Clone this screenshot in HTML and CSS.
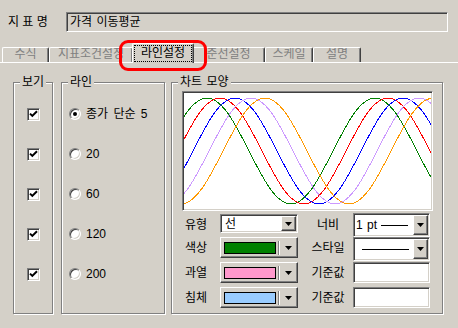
FILE: index.html
```html
<!DOCTYPE html>
<html lang="ko">
<head>
<meta charset="utf-8">
<title>지표 설정</title>
<link rel="stylesheet" href="styles.css">
</head>
<body>
<div class="dialog">
  <div class="name-row">
    <span class="name-label">지 표 명</span>
    <div class="name-input">가격 이동평균</div>
  </div>

  <div class="tabs">
    <div class="tab w47">수식</div>
    <div class="tab w84">지표조건설정</div>
    <div class="tab active"><span class="focus">라인설정</span></div>
    <div class="tab w73">준선설정</div>
    <div class="tab w48">스케일</div>
    <div class="tab w48">설명</div>
    <div class="highlight"></div>
  </div>

  <div class="groups">
    <fieldset class="group g-view">
      <legend>보기</legend>
      <div class="vlist">
        <div class="vrow center"><span class="check"><svg width="9" height="9" viewBox="0 0 9 9"><polyline points="1,3.6 3.3,5.9 8,1.2" fill="none" stroke="#000" stroke-width="2"/></svg></span></div>
        <div class="vrow center"><span class="check"><svg width="9" height="9" viewBox="0 0 9 9"><polyline points="1,3.6 3.3,5.9 8,1.2" fill="none" stroke="#000" stroke-width="2"/></svg></span></div>
        <div class="vrow center"><span class="check"><svg width="9" height="9" viewBox="0 0 9 9"><polyline points="1,3.6 3.3,5.9 8,1.2" fill="none" stroke="#000" stroke-width="2"/></svg></span></div>
        <div class="vrow center"><span class="check"><svg width="9" height="9" viewBox="0 0 9 9"><polyline points="1,3.6 3.3,5.9 8,1.2" fill="none" stroke="#000" stroke-width="2"/></svg></span></div>
        <div class="vrow center"><span class="check"><svg width="9" height="9" viewBox="0 0 9 9"><polyline points="1,3.6 3.3,5.9 8,1.2" fill="none" stroke="#000" stroke-width="2"/></svg></span></div>
      </div>
    </fieldset>

    <fieldset class="group g-line">
      <legend>라인</legend>
      <div class="vlist radios">
        <div class="vrow"><span class="radio on"></span><span class="rlabel">종가 단순 5</span></div>
        <div class="vrow"><span class="radio"></span><span class="rlabel">20</span></div>
        <div class="vrow"><span class="radio"></span><span class="rlabel">60</span></div>
        <div class="vrow"><span class="radio"></span><span class="rlabel">120</span></div>
        <div class="vrow"><span class="radio"></span><span class="rlabel">200</span></div>
      </div>
    </fieldset>

    <fieldset class="group g-chart">
      <legend>차트 모양</legend>
      <div class="chart-body">
        <div class="chart">
          <svg width="247" height="116" viewBox="0 0 247 116" class="waves">
            <defs>
              <path id="wave" fill="none" d="M-168,5 C-137.5,5 -114.5,111 -84,111 S-30.5,5 0,5 S53.5,111 84,111 S137.5,5 168,5 S221.5,111 252,111 S305.5,5 336,5"/>
            </defs>
            <use href="#wave" x="23" stroke="#008000"/>
            <use href="#wave" x="36" stroke="#ff0000"/>
            <use href="#wave" x="51" stroke="#0000ff"/>
            <use href="#wave" x="67" stroke="#cc99ff"/>
            <use href="#wave" x="81" stroke="#ff9900"/>
          </svg>
        </div>

        <div class="props">
          <div class="prow r1">
            <span class="plabel">유형</span>
            <div class="combo combo-type">
              <span class="combo-text">선</span>
              <span class="combo-btn"><svg width="7" height="4" viewBox="0 0 7 4"><path d="M0 0H7L3.5 4Z"/></svg></span>
            </div>
            <span class="plabel right">너비</span>
            <div class="combo combo-wide">
              <span class="combo-text">1 pt<i class="lw"></i></span>
              <span class="combo-btn"><svg width="7" height="4" viewBox="0 0 7 4"><path d="M0 0H7L3.5 4Z"/></svg></span>
            </div>
          </div>

          <div class="prow">
            <span class="plabel">색상</span>
            <div class="colorbtn">
              <span class="swatch green"></span><span class="sep"></span>
              <svg class="arrow" width="7" height="4" viewBox="0 0 7 4"><path d="M0 0H7L3.5 4Z"/></svg>
            </div>
            <span class="plabel right">스타일</span>
            <div class="combo combo-wide">
              <span class="combo-text"><i class="lw long"></i></span>
              <span class="combo-btn"><svg width="7" height="4" viewBox="0 0 7 4"><path d="M0 0H7L3.5 4Z"/></svg></span>
            </div>
          </div>

          <div class="prow">
            <span class="plabel">과열</span>
            <div class="colorbtn">
              <span class="swatch pink"></span><span class="sep"></span>
              <svg class="arrow" width="7" height="4" viewBox="0 0 7 4"><path d="M0 0H7L3.5 4Z"/></svg>
            </div>
            <span class="plabel right">기준값</span>
            <div class="tbox"></div>
          </div>

          <div class="prow">
            <span class="plabel">침체</span>
            <div class="colorbtn">
              <span class="swatch sky"></span><span class="sep"></span>
              <svg class="arrow" width="7" height="4" viewBox="0 0 7 4"><path d="M0 0H7L3.5 4Z"/></svg>
            </div>
            <span class="plabel right">기준값</span>
            <div class="tbox"></div>
          </div>
        </div>
      </div>
    </fieldset>
  </div>
</div>
</body>
</html>
```

FILE: styles.css
```css
* { box-sizing: border-box; }
html, body { margin: 0; padding: 0; }
body {
  width: 458px;
  height: 328px;
  overflow: hidden;
  background: #d4d0c8;
  color: #000;
  font-family: "Liberation Sans", "Noto Sans CJK KR", sans-serif;
  font-size: 12px;
  line-height: 14px;
  word-spacing: 1px;
}

/* name row */
.name-row {
  display: flex;
  align-items: center;
  padding: 12px 0 0 8px;
}
.name-label {
  width: 58px;
  line-height: 20px;
  white-space: pre;
  word-spacing: 0;
}
.name-input {
  width: 382px;
  height: 20px;
  padding: 0 3px;
  line-height: 18px;
  border: 1px solid;
  border-color: #808080 #fff #fff #808080;
  box-shadow: inset 1px 1px #404040, inset -1px -1px #d4d0c8;
}

/* tabs */
.tabs {
  position: relative;
  display: flex;
  align-items: flex-end;
  margin-top: 11px;
  height: 20px;
  padding-left: 2px;
  border-bottom: 1px solid #fff;
}
.tab {
  height: 15px;
  border: 1px solid #fff;
  border-bottom: none;
  border-right-color: #404040;
  border-radius: 2px 2px 0 0;
  box-shadow: inset -1px 0 #808080;
  text-align: center;
  color: #808080;
  line-height: 13px;
  white-space: nowrap;
  overflow: hidden;
}
.w47 { width: 47px; }
.w84 { width: 84px; }
.w73 { width: 73px; }
.w48 { width: 48px; }
.tab.active {
  position: relative;
  z-index: 1;
  width: 62px;
  height: 20px;
  margin: 0 -2px -1px -1px;
  padding: 1px 1px 1px 1px;
  background: #d4d0c8;
  color: #000;
}
.focus {
  display: block;
  height: 17px;
  border: 1px dotted #000;
  line-height: 14px;
}
.highlight {
  position: absolute;
  z-index: 2;
  left: 119px;
  top: -3px;
  width: 88px;
  height: 31px;
  border: 3px solid #ff0000;
  border-radius: 9px;
}

/* group boxes */
.groups {
  display: flex;
  margin-top: 13px;
  padding-left: 13px;
}
.group {
  margin: 0;
  padding: 0;
  min-inline-size: 0;
  height: 238px;
  border: 1px solid #808080;
  box-shadow: inset 1px 1px #fff, 1px 1px #fff;
}
.group legend {
  margin-left: 6px;
  padding: 0 2px;
  height: 12px;
  line-height: 12px;
  background: #d4d0c8;
}
.g-view { width: 40px; }
.g-line { width: 104px; margin-left: 8px; }
.g-chart { width: 272px; margin-left: 6px; }

.vlist {
  display: flex;
  flex-direction: column;
  padding-top: 6px;
}
.vrow {
  height: 40px;
  display: flex;
  align-items: center;
}
.vrow.center { justify-content: center; }
.radios { padding-left: 7px; }
.radios .vrow { gap: 5px; }
.rlabel { word-spacing: 2px; line-height: 14px; }

.check {
  width: 13px;
  height: 13px;
  display: flex;
  align-items: center;
  justify-content: center;
  background: #fff;
  border: 1px solid;
  border-color: #808080 #fff #fff #808080;
  box-shadow: inset 1px 1px #404040, inset -1px -1px #d4d0c8;
}
.check svg { display: block; }

.radio {
  width: 12px;
  height: 12px;
  border-radius: 50%;
  background: #fff;
  border: 1px solid;
  border-color: #808080 #fff #fff #808080;
  box-shadow: inset 1px 1px #404040, inset -1px -1px #d4d0c8;
  display: flex;
  align-items: center;
  justify-content: center;
}
.radio.on::after {
  content: "";
  width: 4px;
  height: 4px;
  border-radius: 50%;
  background: #000;
}

/* chart */
.chart-body { padding: 3px 9px 0 10px; }
.chart {
  width: 251px;
  height: 120px;
  padding: 1px;
  background: #fff;
  border: 1px solid;
  border-color: #808080 #fff #fff #808080;
  box-shadow: inset 1px 1px #404040, inset -1px -1px #d4d0c8;
}
.waves { display: block; shape-rendering: crispEdges; stroke-width: 1; }

/* property rows */
.props { margin-top: 2px; }
.prow {
  display: flex;
  align-items: flex-start;
  height: 25px;
}
.prow.r1 { height: 24px; }
.plabel {
  width: 38px;
  padding-left: 3px;
  line-height: 22px;
  white-space: nowrap;
}
.r1 .plabel { line-height: 24px; }
.plabel.right {
  width: 44px;
  margin-left: 8px;
  margin-right: 3px;
  padding-left: 0;
  text-align: center;
}

.combo {
  display: flex;
  padding: 1px;
  background: #fff;
  border: 1px solid;
  border-color: #808080 #fff #fff #808080;
  box-shadow: inset 1px 1px #404040, inset -1px -1px #d4d0c8;
}
.combo-type { width: 78px; height: 19px; margin-top: 1px; }
.combo-wide { width: 77px; height: 24px; }
.combo-text {
  flex: 1;
  display: flex;
  align-items: center;
  padding-left: 3px;
  white-space: nowrap;
}
.combo-wide .combo-text { padding-left: 1px; }
.lw {
  display: block;
  width: 27px;
  height: 1px;
  margin-left: 4px;
  background: #000;
}
.lw.long { width: 47px; margin-left: 6px; }
.combo-btn {
  width: 15px;
  display: flex;
  align-items: center;
  justify-content: center;
  background: #d4d0c8;
  border: 1px solid;
  border-color: #fff #404040 #404040 #fff;
  box-shadow: inset -1px -1px #808080;
}
.combo-btn svg, .arrow { display: block; }

.colorbtn {
  width: 78px;
  height: 21px;
  display: flex;
  align-items: center;
  padding-left: 3px;
  border: 1px solid;
  border-color: #fff #404040 #404040 #fff;
  box-shadow: inset -1px -1px #808080;
}
.swatch {
  width: 52px;
  height: 12px;
  border: 1px solid #000;
}
.green { background: #008000; }
.pink { background: #ff99cc; }
.sky { background: #99ccff; }
.sep {
  width: 2px;
  height: 14px;
  margin-left: 2px;
  border-left: 1px solid #808080;
  border-right: 1px solid #fff;
}
.arrow { margin-left: 5px; }

.tbox {
  width: 77px;
  height: 21px;
  background: #fff;
  border: 1px solid;
  border-color: #808080 #fff #fff #808080;
  box-shadow: inset 1px 1px #404040, inset -1px -1px #d4d0c8;
}
```
